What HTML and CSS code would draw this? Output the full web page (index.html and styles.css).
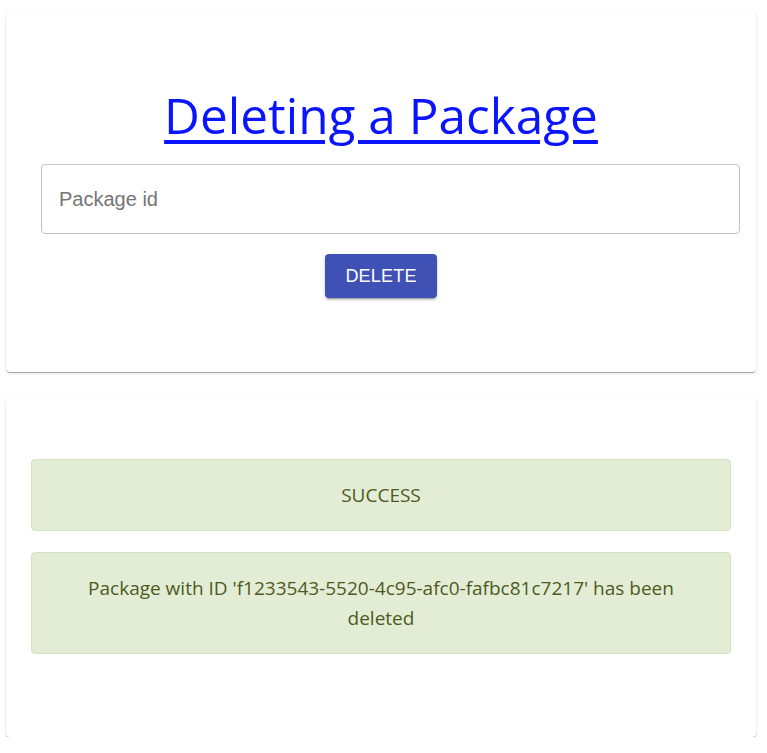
FILE: index.html
```html
<!DOCTYPE html>
<html>
<head>
<meta charset="utf-8">
<link rel="stylesheet" href="styles.css">
</head>
<body>
<div class="page">
  <div class="card card-form">
    <h1 class="title"><a href="#">Deleting a Package</a></h1>
    <div class="field">
      <input class="input" type="text" placeholder="Package id">
    </div>
    <div class="actions">
      <button class="btn">DELETE</button>
    </div>
  </div>
  <div class="card card-result">
    <div class="alert">SUCCESS</div>
    <div class="alert">Package with ID 'f1233543-5520-4c95-afc0-fafbc81c7217' has been deleted</div>
  </div>
</div>
</body>
</html>
```

FILE: styles.css
```css
html, body {
  margin: 0;
  padding: 0;
  background: #fff;
}
.page {
  padding: 11px 11px 0 6px;
  display: flex;
  flex-direction: column;
  gap: 25px;
}
.card {
  width: 750px;
  box-sizing: border-box;
  background: #fff;
  border-radius: 4px;
  box-shadow: 0px 2px 1px -1px rgba(0,0,0,0.2), 0px 1px 1px 0px rgba(0,0,0,0.14), 0px 1px 3px 0px rgba(0,0,0,0.12);
}
.card-form {
  padding: 74px 16px 74px 35px;
  height: 361px;
}
.title {
  margin: 0;
  height: 60px;
  line-height: 60px;
  font-family: "Open Sans", sans-serif;
  font-size: 49.5px;
  font-weight: 400;
  text-align: center;
  padding-right: 19px;
}
.title a {
  color: #0a14ff;
  text-decoration: underline;
  text-decoration-thickness: 4px;
  text-underline-offset: 6px;
}
.field {
  margin-top: 19px;
}
.input {
  display: block;
  width: 100%;
  box-sizing: border-box;
  height: 70px;
  border: 1px solid #c4c4c4;
  border-radius: 4px;
  padding: 0 17px;
  font-family: "Liberation Sans", Arial, sans-serif;
  font-size: 20px;
  color: #222;
  outline: none;
}
.input::placeholder {
  color: #757575;
}
.actions {
  margin-top: 20px;
  display: flex;
  justify-content: center;
  padding-right: 19px;
}
.btn {
  height: 44px;
  width: 112px;
  border: none;
  border-radius: 4px;
  background: #3f51b5;
  color: #fff;
  font-family: "Liberation Sans", Arial, sans-serif;
  font-size: 18px;
  letter-spacing: 0.2px;
  box-shadow: 0px 3px 1px -2px rgba(0,0,0,0.2), 0px 2px 2px 0px rgba(0,0,0,0.14), 0px 1px 5px 0px rgba(0,0,0,0.12);
  cursor: pointer;
}
.card-result {
  padding: 62px 25px 84px 25px;
  height: 340px;
  display: flex;
  flex-direction: column;
  gap: 21px;
}
.alert {
  background: #e3edd6;
  border: 1px solid #d3e3bd;
  border-radius: 4px;
  padding: 20px 40px;
  text-align: center;
  font-family: "Open Sans", sans-serif;
  font-size: 19px;
  line-height: 30px;
  color: #4d5a1e;
}
```
